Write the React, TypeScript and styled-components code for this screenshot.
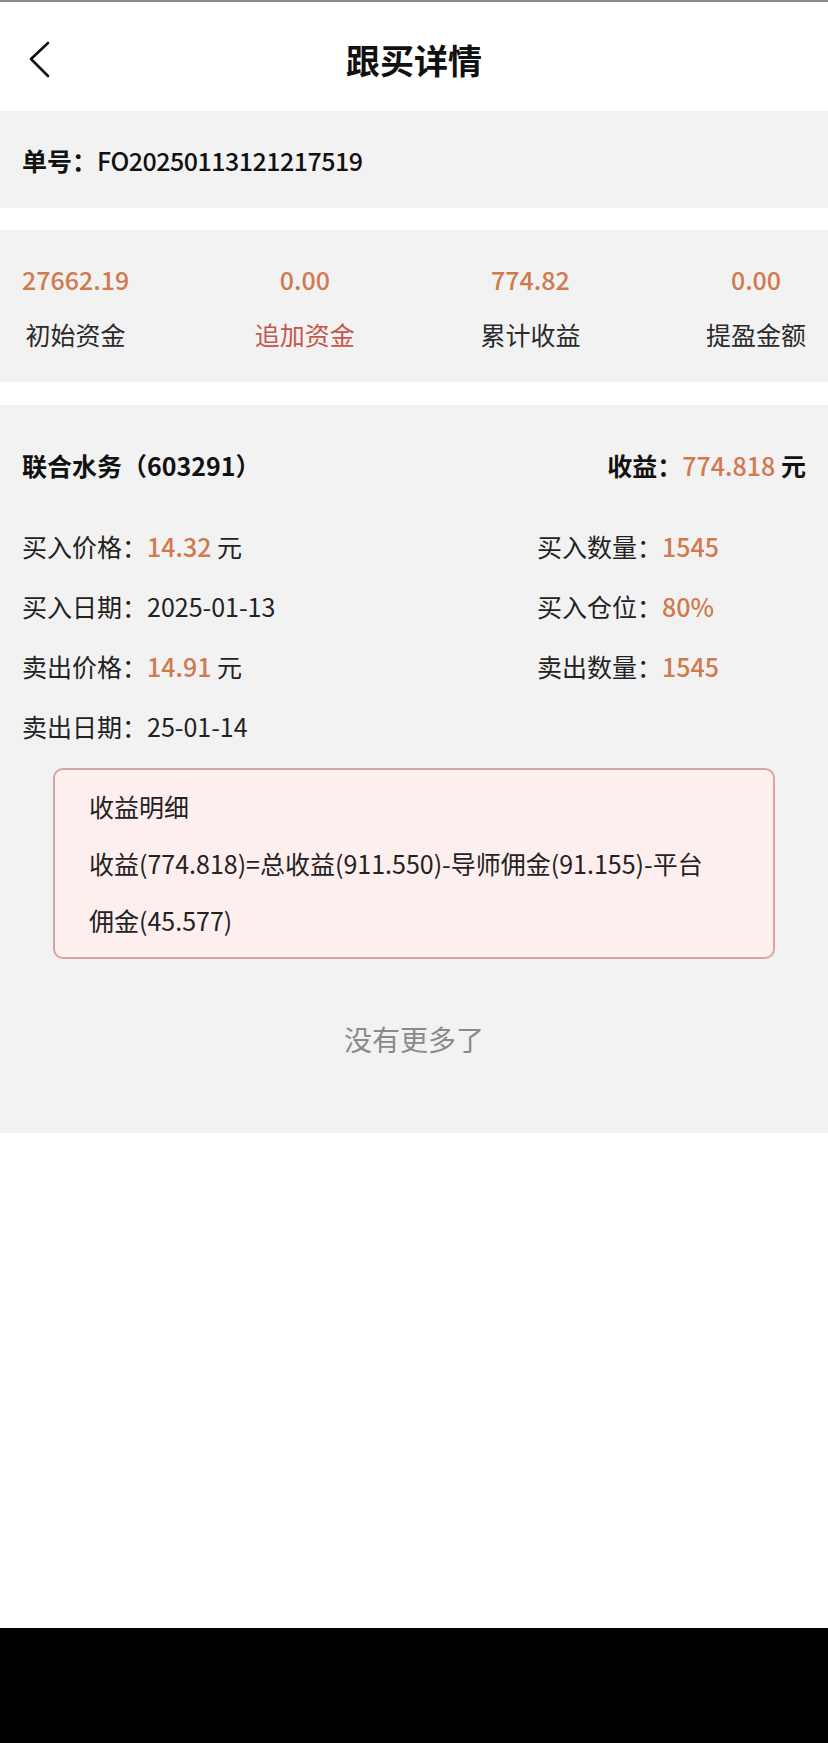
import * as React from "react";
import styled, { createGlobalStyle } from "styled-components";

const GlobalStyle = createGlobalStyle`
  html, body {
    margin: 0;
    padding: 0;
    background: #ffffff;
  }
  body {
    font-family: "Noto Sans CJK SC", "Noto Sans", sans-serif;
    color: #222222;
  }
`;

const ScPage = styled.div`
  width: 828px;
  min-height: 100vh;
  display: flex;
  flex-direction: column;
  background: #ffffff;
`;

const ScHeader = styled.header`
  height: 111px;
  box-sizing: border-box;
  border-top: 2px solid #8a8a8a;
  padding-top: 6px;
  display: flex;
  align-items: center;
`;

const ScHeaderSide = styled.div`
  width: 120px;
  display: flex;
  align-items: center;
  padding-left: 28px;
  box-sizing: border-box;
`;

const ScTitle = styled.h1`
  flex: 1;
  margin: 0;
  text-align: center;
  font-size: 34px;
  font-weight: 700;
  color: #111111;
  line-height: 40px;
`;

const ScBand = styled.section<{ $gap?: number }>`
  background: #f2f2f2;
  margin-top: ${(p) => p.$gap ?? 0}px;
`;

const ScOrderBar = styled(ScBand)`
  height: 97px;
  display: flex;
  align-items: center;
  padding: 0 22px;
  font-size: 25px;
  color: #111111;
`;

const ScStrong = styled.span`
  font-weight: 700;
`;

const ScOrderNo = styled.span`
  font-weight: 500;
  letter-spacing: -0.5px;
`;

const ScStats = styled(ScBand)`
  height: 152px;
  box-sizing: border-box;
  padding: 33px 22px 0;
  display: flex;
  justify-content: space-between;
`;

const ScStat = styled.div`
  display: flex;
  flex-direction: column;
  align-items: center;
  gap: 23px;
`;

const ScStatValue = styled.div`
  font-size: 25px;
  line-height: 32px;
  font-weight: 500;
  color: #d07a4e;
`;

const ScStatLabel = styled.div<{ $accent?: boolean }>`
  font-size: 25px;
  line-height: 32px;
  color: ${(p) => (p.$accent ? "#c4574c" : "#2a2a2a")};
`;

const ScDetail = styled(ScBand)`
  padding: 42px 22px 74px;
`;

const ScDetailHead = styled.div`
  display: flex;
  justify-content: space-between;
  font-size: 25px;
  line-height: 36px;
  font-weight: 700;
  color: #111111;
`;

const ScGrid = styled.div`
  margin-top: 45px;
  display: grid;
  grid-template-columns: 515px 1fr;
  row-gap: 24px;
`;

const ScField = styled.div`
  font-size: 25px;
  line-height: 36px;
  color: #222222;
  white-space: nowrap;
`;

const ScOrange = styled.span<{ $weight?: number }>`
  color: #d07a4e;
  font-weight: ${(p) => p.$weight ?? 500};
`;

const ScBreakdown = styled.div`
  margin: 24px 31px 0;
  border: 2px solid #d9a3a3;
  border-radius: 10px;
  background: #fcefee;
  padding: 8px 34px;
  font-size: 25px;
  line-height: 57px;
  color: #222222;
`;

const ScNoMore = styled.div`
  margin-top: 60px;
  text-align: center;
  font-size: 28px;
  line-height: 40px;
  color: #8a8a8a;
`;

const ScFill = styled.div`
  flex: 1;
`;

const ScHomeBar = styled.div`
  height: 115px;
  background: #000000;
`;

function BackIcon(): JSX.Element {
  return (
    <svg width="24" height="38" viewBox="0 0 24 38" fill="none">
      <path d="M20 2 L3 18 L20 35" stroke="#111" strokeWidth="2.6" strokeLinecap="round" strokeLinejoin="round" />
    </svg>
  );
}

const stats = [
  { value: "27662.19", label: "初始资金" },
  { value: "0.00", label: "追加资金", accent: true },
  { value: "774.82", label: "累计收益" },
  { value: "0.00", label: "提盈金额" },
];

export default function App(): JSX.Element {
  return (
    <>
      <GlobalStyle />
      <ScPage>
        <ScHeader>
          <ScHeaderSide>
            <BackIcon />
          </ScHeaderSide>
          <ScTitle>跟买详情</ScTitle>
          <ScHeaderSide />
        </ScHeader>

        <ScOrderBar>
          <ScStrong>单号：</ScStrong>
          <ScOrderNo>FO20250113121217519</ScOrderNo>
        </ScOrderBar>

        <ScStats $gap={22}>
          {stats.map((s) => (
            <ScStat key={s.label}>
              <ScStatValue>{s.value}</ScStatValue>
              <ScStatLabel $accent={s.accent}>{s.label}</ScStatLabel>
            </ScStat>
          ))}
        </ScStats>

        <ScDetail $gap={23}>
          <ScDetailHead>
            <span>联合水务（603291）</span>
            <span>
              收益：<ScOrange>774.818</ScOrange> 元
            </span>
          </ScDetailHead>
          <ScGrid>
            <ScField>
              买入价格：<ScOrange>14.32</ScOrange> 元
            </ScField>
            <ScField>
              买入数量：<ScOrange>1545</ScOrange>
            </ScField>
            <ScField>买入日期：2025-01-13</ScField>
            <ScField>
              买入仓位：<ScOrange>80%</ScOrange>
            </ScField>
            <ScField>
              卖出价格：<ScOrange>14.91</ScOrange> 元
            </ScField>
            <ScField>
              卖出数量：<ScOrange>1545</ScOrange>
            </ScField>
            <ScField>卖出日期：25-01-14</ScField>
          </ScGrid>
          <ScBreakdown>
            <div>收益明细</div>
            <div>
              收益(774.818)=总收益(911.550)-导师佣金(91.155)-平台
              <br />
              佣金(45.577)
            </div>
          </ScBreakdown>
          <ScNoMore>没有更多了</ScNoMore>
        </ScDetail>

        <ScFill />
        <ScHomeBar />
      </ScPage>
    </>
  );
}
